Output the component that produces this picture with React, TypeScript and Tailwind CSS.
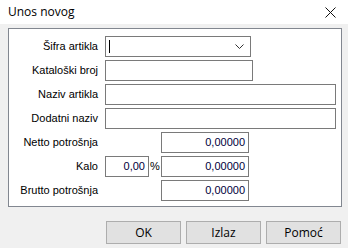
import React from "react";

const font = { fontFamily: '"Liberation Sans", Arial, sans-serif' };

const Label = ({ text }: { text: string }) => (
	<div className="flex h-[21px] w-[89px] items-center justify-end text-[11px] text-black">
		{text}
	</div>
);

const Box = ({ w, value }: { w: string; value?: string }) => (
	<div
		className={`flex h-[21px] ${w} items-center justify-end border border-[#7a7a7a] bg-white pr-[3px] text-[11px] text-[#00003a]`}
	>
		{value}
	</div>
);

export default function App() {
	return (
		<div
			className="relative h-[248px] w-[348px] overflow-hidden bg-[#f0f0f0]"
			style={font}
		>
			<div className="flex h-[24px] items-center justify-between bg-white pl-[8px] pr-[12px]">
				<span
					className="text-[12px] text-black"
					style={{ fontFamily: '"Open Sans", "Liberation Sans", sans-serif' }}
				>
					Unos novog
				</span>
				<svg width="11" height="11" viewBox="0 0 11 11">
					<path d="M0.5 0.5 L10.5 10.5 M10.5 0.5 L0.5 10.5" stroke="#111" strokeWidth="1" />
				</svg>
			</div>

			<div className="ml-[8px] mt-[4px] h-[179px] w-[334px] border border-[#828790] bg-white pt-[7px]">
				<div className="flex flex-col gap-[3px]">
					<div className="flex gap-[7px]">
						<Label text="Šifra artikla" />
						<div className="relative flex h-[21px] w-[146px] items-center justify-between border border-[#7a7a7a] bg-white pl-[3px] pr-[6px]">
							<div className="h-[13px] w-[1px] bg-black" />
							<svg width="9" height="6" viewBox="0 0 9 6">
								<path d="M0.5 0.5 L4.5 4.5 L8.5 0.5" fill="none" stroke="#333" strokeWidth="1" />
							</svg>
						</div>
					</div>
					<div className="flex gap-[7px]">
						<Label text="Kataloški broj" />
						<Box w="w-[148px]" />
					</div>
					<div className="flex gap-[7px]">
						<Label text="Naziv artikla" />
						<Box w="w-[231px]" />
					</div>
					<div className="flex gap-[7px]">
						<Label text="Dodatni naziv" />
						<Box w="w-[231px]" />
					</div>
					<div className="flex gap-[7px]">
						<Label text="Netto potrošnja" />
						<div className="ml-[56px]">
							<Box w="w-[88px]" value="0,00000" />
						</div>
					</div>
					<div className="flex gap-[7px]">
						<Label text="Kalo" />
						<div className="flex items-center">
							<Box w="w-[44px]" value="0,00" />
							<span className="w-[12px] pl-[1px] text-[11px] text-black">%</span>
							<Box w="w-[88px]" value="0,00000" />
						</div>
					</div>
					<div className="flex gap-[7px]">
						<Label text="Brutto potrošnja" />
						<div className="ml-[56px]">
							<Box w="w-[88px]" value="0,00000" />
						</div>
					</div>
				</div>
			</div>

			<div className="mr-[7px] mt-[14px] flex justify-end gap-[5px]">
				{["OK", "Izlaz", "Pomoć"].map((b) => (
					<div
						key={b}
						className="flex h-[23px] w-[75px] items-center justify-center border border-[#adadad] bg-[#e1e1e1] text-[12px] text-black"
						style={{ fontFamily: '"Open Sans", "Liberation Sans", sans-serif' }}
					>
						{b}
					</div>
				))}
			</div>
		</div>
	);
}
